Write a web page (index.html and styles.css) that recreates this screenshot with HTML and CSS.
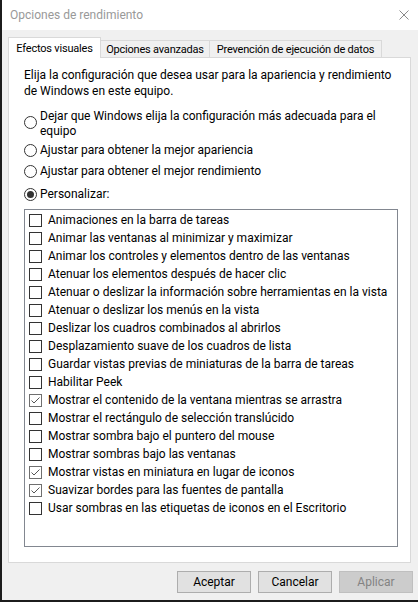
FILE: index.html
```html
<!DOCTYPE html>
<html lang="es">
<head>
<meta charset="utf-8">
<title>Opciones de rendimiento</title>
<link rel="stylesheet" href="styles.css">
</head>
<body>
<div class="window">
  <div class="titlebar">
    <span class="title">Opciones de rendimiento</span>
    <svg class="close" width="10" height="10" viewBox="0 0 10 10"><path d="M0.5 0.5 L9.5 9.5 M9.5 0.5 L0.5 9.5" stroke="#8a8a8a" stroke-width="1" fill="none"/></svg>
  </div>
  <div class="content">
    <div class="tabs">
      <div class="tab active">Efectos visuales</div>
      <div class="tab t2">Opciones avanzadas</div>
      <div class="tab t3">Prevención de ejecución de datos</div>
    </div>
    <div class="panel">
      <p class="intro">Elija la configuración que desea usar para la apariencia y rendimiento<br>de Windows en este equipo.</p>
      <div class="radio r1"><span class="dot"></span><span class="rlabel">Dejar que Windows elija la configuración más adecuada para el<br>equipo</span></div>
      <div class="radio r2"><span class="dot"></span><span class="rlabel">Ajustar para obtener la mejor apariencia</span></div>
      <div class="radio r3"><span class="dot"></span><span class="rlabel">Ajustar para obtener el mejor rendimiento</span></div>
      <div class="radio r4"><span class="dot on"></span><span class="rlabel">Personalizar:</span></div>
      <div class="list">
        <div class="item"><span class="box"></span>Animaciones en la barra de tareas</div>
        <div class="item"><span class="box"></span>Animar las ventanas al minimizar y maximizar</div>
        <div class="item"><span class="box"></span>Animar los controles y elementos dentro de las ventanas</div>
        <div class="item"><span class="box"></span>Atenuar los elementos después de hacer clic</div>
        <div class="item"><span class="box"></span>Atenuar o deslizar la información sobre herramientas en la vista</div>
        <div class="item"><span class="box"></span>Atenuar o deslizar los menús en la vista</div>
        <div class="item"><span class="box"></span>Deslizar los cuadros combinados al abrirlos</div>
        <div class="item"><span class="box"></span>Desplazamiento suave de los cuadros de lista</div>
        <div class="item"><span class="box"></span>Guardar vistas previas de miniaturas de la barra de tareas</div>
        <div class="item"><span class="box"></span>Habilitar Peek</div>
        <div class="item"><span class="box checked"><svg width="11" height="11" viewBox="0 0 11 11"><path d="M1.5 5.5 L4 8 L9.5 2.5" stroke="#555" stroke-width="1" fill="none"/></svg></span>Mostrar el contenido de la ventana mientras se arrastra</div>
        <div class="item"><span class="box"></span>Mostrar el rectángulo de selección translúcido</div>
        <div class="item"><span class="box"></span>Mostrar sombra bajo el puntero del mouse</div>
        <div class="item"><span class="box"></span>Mostrar sombras bajo las ventanas</div>
        <div class="item"><span class="box checked"><svg width="11" height="11" viewBox="0 0 11 11"><path d="M1.5 5.5 L4 8 L9.5 2.5" stroke="#555" stroke-width="1" fill="none"/></svg></span>Mostrar vistas en miniatura en lugar de iconos</div>
        <div class="item"><span class="box checked"><svg width="11" height="11" viewBox="0 0 11 11"><path d="M1.5 5.5 L4 8 L9.5 2.5" stroke="#555" stroke-width="1" fill="none"/></svg></span>Suavizar bordes para las fuentes de pantalla</div>
        <div class="item"><span class="box"></span>Usar sombras en las etiquetas de iconos en el Escritorio</div>
      </div>
    </div>
    <div class="buttons">
      <button class="btn">Aceptar</button>
      <button class="btn">Cancelar</button>
      <button class="btn disabled">Aplicar</button>
    </div>
  </div>
</div>
</body>
</html>
```

FILE: styles.css
```css
html, body {
  margin: 0;
  padding: 0;
}
body {
  background: #1c1c1c;
  width: 418px;
  height: 602px;
  overflow: hidden;
  font-family: Roboto, "Liberation Sans", Arial, sans-serif;
  font-size: 12px;
  color: #000;
}
.window {
  margin-left: 2px;
  width: 416px;
  height: 600px;
  background: #f0f0f0;
  display: flex;
  flex-direction: column;
}
.titlebar {
  height: 30px;
  background: #fff;
  display: flex;
  align-items: center;
  justify-content: space-between;
  padding: 0 9px 0 8px;
  box-sizing: border-box;
  flex-shrink: 0;
}
.title {
  color: #999;
  font-size: 12px;
}
.close {
  display: block;
}
.content {
  padding: 7px 6px 0 6px;
  display: flex;
  flex-direction: column;
}
.tabs {
  display: flex;
  align-items: flex-end;
  height: 20px;
  position: relative;
  z-index: 1;
}
.tab {
  box-sizing: border-box;
  display: flex;
  align-items: center;
  justify-content: center;
  background: #f0f0f0;
  border: 1px solid #d9d9d9;
  border-bottom: none;
  height: 17px;
  white-space: nowrap;
  font-size: 11px;
  letter-spacing: -0.2px;
}
.tab.active {
  width: 93px;
  height: 21px;
  margin-bottom: -1px;
  background: #fff;
}
.tab.t2 {
  width: 109px;
  border-left: none;
}
.tab.t3 {
  width: 172px;
  border-left: none;
}
.panel {
  width: 403px;
  height: 506px;
  box-sizing: border-box;
  background: #fff;
  border: 1px solid #d9d9d9;
  padding: 9px 0 0 15px;
}
.intro {
  margin: 0;
  line-height: 16px;
  white-space: nowrap;
}
.radio {
  display: flex;
  align-items: center;
  line-height: 15px;
  white-space: nowrap;
}
.r1 { margin-top: 10px; }
.r2 { margin-top: 4px; }
.r3 { margin-top: 6px; }
.r4 { margin-top: 8px; }
.dot {
  flex-shrink: 0;
  width: 13px;
  height: 13px;
  box-sizing: border-box;
  border: 1px solid #333;
  border-radius: 50%;
  margin-right: 3px;
  display: flex;
  align-items: center;
  justify-content: center;
}
.r1 .dot { margin-top: -3px; }
.dot.on::after {
  content: "";
  width: 7px;
  height: 7px;
  border-radius: 50%;
  background: #333;
}
.list {
  margin-top: 7px;
  width: 374px;
  height: 338px;
  box-sizing: border-box;
  border: 1px solid #828790;
  padding: 1px 0 0 4px;
}
.item {
  height: 18px;
  display: flex;
  align-items: center;
  white-space: nowrap;
}
.box {
  width: 13px;
  height: 13px;
  box-sizing: border-box;
  border: 1px solid #333;
  margin-right: 6px;
  flex-shrink: 0;
  display: flex;
}
.box.checked {
  border-color: #6f6f6f;
}
.box svg {
  display: block;
}
.buttons {
  display: flex;
  justify-content: flex-end;
  gap: 7px;
  margin-top: 8px;
  margin-right: -1px;
}
.btn {
  width: 74px;
  height: 22px;
  box-sizing: border-box;
  background: #e1e1e1;
  border: 1px solid #adadad;
  font-family: inherit;
  font-size: 12px;
  color: #000;
  padding: 0;
  margin: 0;
}
.btn.disabled {
  background: #cccccc;
  border-color: #bfbfbf;
  color: #838383;
}
```
